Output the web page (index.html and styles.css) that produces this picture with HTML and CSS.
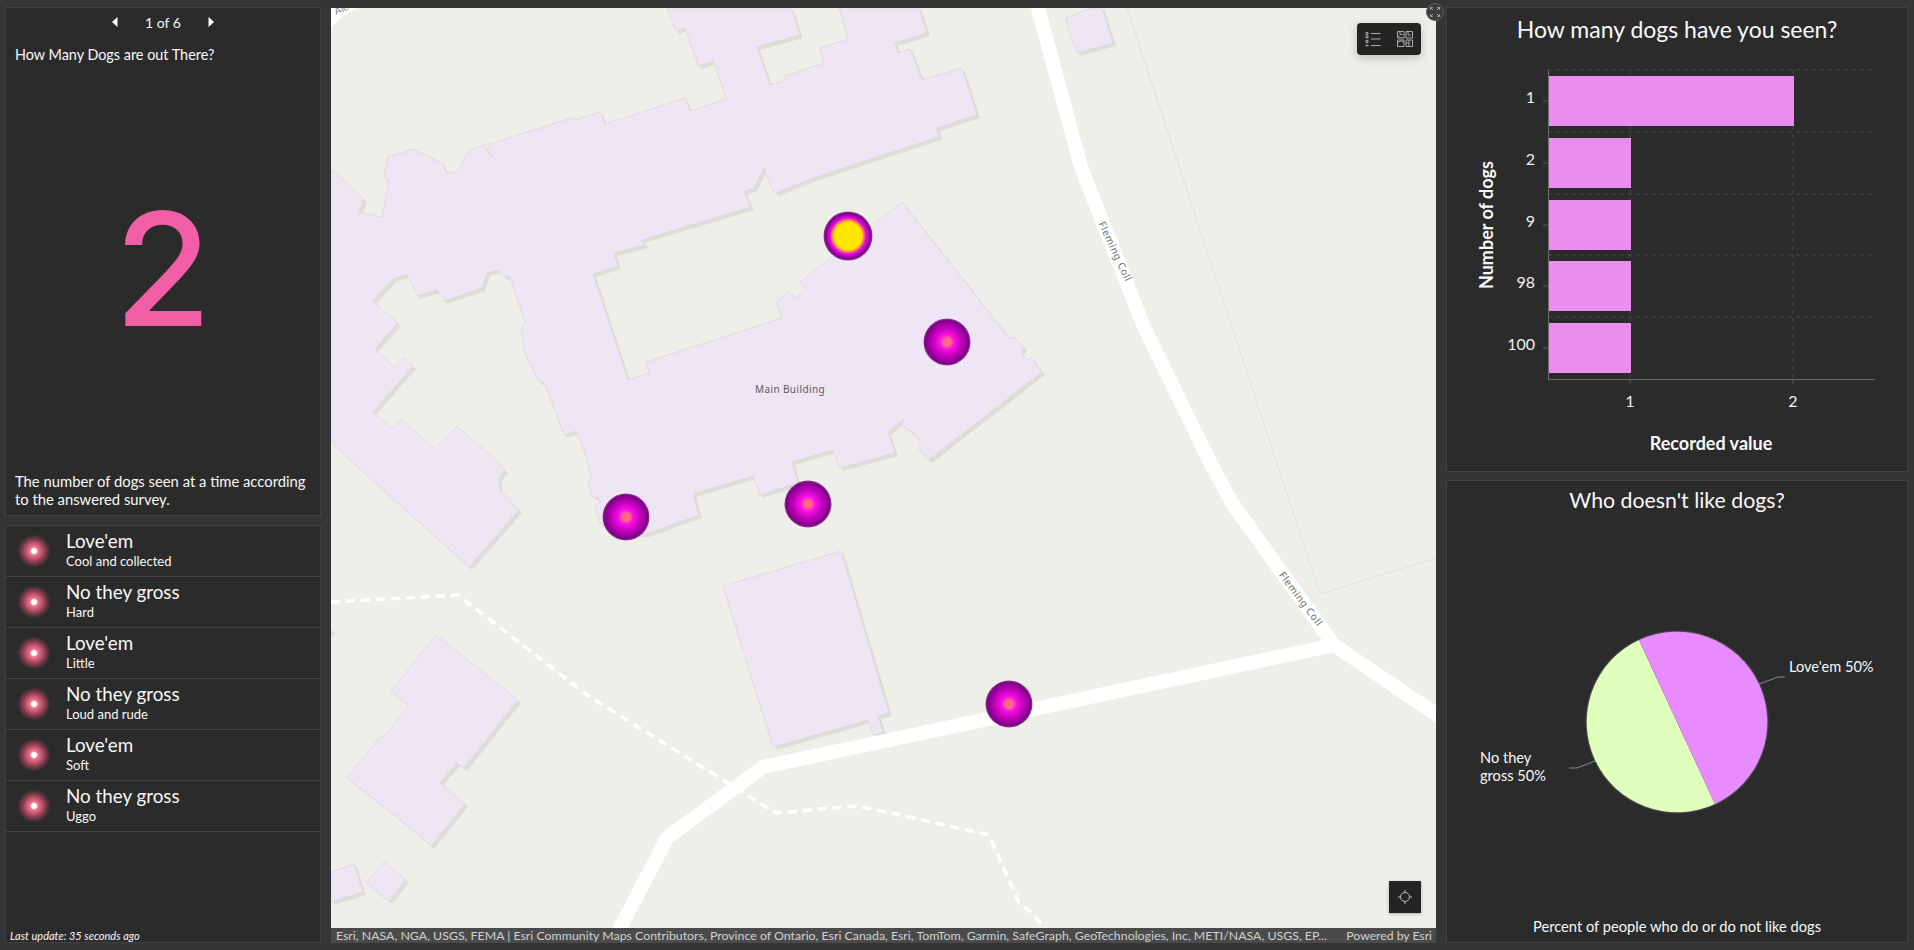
FILE: index.html
```html
<!DOCTYPE html>
<html lang="en">
<head>
  <meta charset="UTF-8">
  <meta name="viewport" content="width=device-width, initial-scale=1.0">
  <title>Dogs Dashboard</title>
  <link rel="stylesheet" href="styles.css">
</head>
<body>
  <div class="column left-column">
    <section class="panel indicator">
      <div class="pager">
        <svg class="pager-arrow" viewBox="0 0 6 10"><polygon points="5.5,0 5.5,10 0,5"/></svg>
        <span>1 of 6</span>
        <svg class="pager-arrow" viewBox="0 0 6 10"><polygon points="0.5,0 0.5,10 6,5"/></svg>
      </div>
      <p class="question">How Many Dogs are out There?</p>
      <div class="big-number">2</div>
      <p class="description">The number of dogs seen at a time according to the answered survey.</p>
    </section>

    <section class="panel list-panel">
      <div class="list-row"><span class="glow"></span><div><div class="row-title">Love'em</div><div class="row-sub">Cool and collected</div></div></div>
      <div class="list-row"><span class="glow"></span><div><div class="row-title">No they gross</div><div class="row-sub">Hard</div></div></div>
      <div class="list-row"><span class="glow"></span><div><div class="row-title">Love'em</div><div class="row-sub">Little</div></div></div>
      <div class="list-row"><span class="glow"></span><div><div class="row-title">No they gross</div><div class="row-sub">Loud and rude</div></div></div>
      <div class="list-row"><span class="glow"></span><div><div class="row-title">Love'em</div><div class="row-sub">Soft</div></div></div>
      <div class="list-row"><span class="glow"></span><div><div class="row-title">No they gross</div><div class="row-sub">Uggo</div></div></div>
      <div class="last-update">Last update: 35 seconds ago</div>
    </section>
  </div>

  <main class="map">
    <!-- viewBox uses page coordinates so the shapes are easy to check against the screenshot -->
    <svg class="map-canvas" viewBox="331 8 1105 935">
      <defs>
        <radialGradient id="dot">
          <stop offset="0" stop-color="#ff6a78"/>
          <stop offset="0.17" stop-color="#ff6a88"/>
          <stop offset="0.3" stop-color="#ff10e6"/>
          <stop offset="0.62" stop-color="#c000bc"/>
          <stop offset="0.92" stop-color="#7f0086"/>
          <stop offset="1" stop-color="#8e4a96"/>
        </radialGradient>
        <radialGradient id="dot-selected">
          <stop offset="0" stop-color="#ffe600"/>
          <stop offset="0.55" stop-color="#ffe600"/>
          <stop offset="0.63" stop-color="#ff9a3c"/>
          <stop offset="0.72" stop-color="#f010e0"/>
          <stop offset="0.92" stop-color="#80008a"/>
          <stop offset="1" stop-color="#8e4a96"/>
        </radialGradient>
        <polygon id="main-building" points="331,169 364,199 359,212 382,217 389,180 384,178 388,157 413,149 442,163 447,174 458,171 469,150 485,145 489,155 493,157 489,144 571,118 573,120 600,112 605,124 685,98 690,111 726,99 714,61 698,66 685,28 676,31 667,8 791,8 800,35 757,47 770,85 786,80 785,76 824,63 820,48 848,39 839,8 919,8 927,33 895,43 898,53 910,49 922,80 962,68 977,115 937,128 939,137 880,156 808,180 776,193 773,191 764,168 754,188 744,192 751,207 642,240 645,245 614,253 618,266 593,274 628,380 649,373 646,362 782,318 776,302 789,291 795,298 806,290 800,282 902,202 1010,339 1014,337 1024,347 1021,353 1028,360 1031,357 1042,372 929,460 917,447 921,443 916,435 901,425 904,419 888,432 895,453 840,468 833,450 792,462 798,483 760,495 753,476 693,494 699,515 646,534 616,535 600,523 595,506 600,503 598,497 592,497 588,482 592,480 587,460 577,431 564,435 544,382 539,382 525,353 521,328 525,323 510,276 504,277 498,270 487,273 482,288 444,301 437,290 417,296 407,275 394,278 373,301 398,323 375,349 394,367 403,357 413,366 373,412 392,429 401,419 435,449 457,426 496,460 505,470 499,478 500,490 519,510 469,567 350,460 331,442"/>
        <polygon id="hall" points="723,586 841,551 889,713 878,716 883,732 873,735 868,720 773,747"/>
        <polygon id="wing" points="436,635 518,700 464,768 457,763 440,783 465,804 431,846 407,825 347,778 380,737 383,738 409,706 391,691"/>
        <polygon id="shed-a" points="331,872 354,864 363,892 331,902"/>
        <polygon id="shed-b" points="384,862 406,880 389,901 366,883"/>
        <polygon id="shed-c" points="1065,18 1092,8 1102,8 1113,43 1077,53"/>
      </defs>

      <rect class="ground" x="331" y="8" width="1105" height="935"/>
      <path class="corner-road" d="M331 8 H358 Q342 15 331 28 Z"/>
      <text class="corner-label" x="336" y="15" transform="rotate(-24 336 15)">Ale</text>
      <polyline class="boundary" points="1127,8 1320,594 1436,558"/>
      <polygon class="shadow" points="331,630 335,633 331,638"/>

      <g class="shadow">
        <use href="#main-building" x="3" y="3"/>
        <use href="#hall" x="3" y="3"/>
        <use href="#wing" x="3" y="3"/>
        <use href="#shed-a" x="3" y="3"/>
        <use href="#shed-b" x="3" y="3"/>
        <use href="#shed-c" x="3" y="3"/>
      </g>
      <g class="building">
        <use href="#main-building"/>
        <use href="#hall"/>
        <use href="#wing"/>
        <use href="#shed-a"/>
        <use href="#shed-b"/>
        <use href="#shed-c"/>
      </g>

      <polyline class="path" points="331,602 458,595 587,695 776,813 855,806 887,812 989,835 1019,903 1028,910 1046,928"/>
      <polyline class="road" points="1037,4 1081,167 1144,327 1209,460 1232,503 1334,645 1440,717"/>
      <polyline class="road" points="1334,645 880,742 763,767 667,838 618,932"/>

      <text class="label-building" x="790" y="393" text-anchor="middle">Main Building</text>
      <text class="label-road" transform="translate(1112 253) rotate(65)" text-anchor="middle">Fleming Coll</text>
      <text class="label-road" transform="translate(1298 601) rotate(53)" text-anchor="middle">Fleming Coll</text>

      <circle cx="848" cy="236" r="24.5" fill="url(#dot-selected)"/>
      <circle cx="947" cy="342" r="23.5" fill="url(#dot)"/>
      <circle cx="626" cy="517" r="23.5" fill="url(#dot)"/>
      <circle cx="808" cy="504" r="23.5" fill="url(#dot)"/>
      <circle cx="1009" cy="704" r="23.5" fill="url(#dot)"/>
    </svg>

    <button class="fullscreen" type="button">
      <svg viewBox="0 0 16 16"><path d="M2 5V2h3M2 2l3.500 3.500M11 2h3v3M14 2l-3.500 3.500M2 11v3h3M2 14l3.500-3.500M11 14h3v-3M14 14l-3.500-3.500"/></svg>
    </button>

    <div class="toolbar">
      <svg class="tool-icon" viewBox="0 0 16 16">
        <path d="M1 1.500h2v2h-2zM1 5h2v2h-2zM1 9.500h2v2h-2z"/>
        <path d="M6 2.500h9.500M6 8h9.500M6 14.500h9.500M.5 14.500h3M2 13.500v2"/>
      </svg>
      <svg class="tool-icon" viewBox="0 0 16 16">
        <path d="M.5.500h6.500v6.500h-6.500zM9 .500h6.500v6.500h-6.500zM.5 9h6.500v6.500h-6.500zM9 9h6.500v6.500h-6.500z"/>
        <path d="M.5 4l3 3M3 1v2.500h2.500M11 .500v3.500h3M.5 12l2.500-2h2l2 2M12 9v6.500M9 12h3"/>
      </svg>
    </div>

    <button class="locate" type="button">
      <svg viewBox="0 0 16 16"><circle cx="8" cy="8" r="4.500"/><path d="M8 1v2.500M8 12.500v2.500M1 8h2.500M12.500 8h2.500"/></svg>
    </button>

    <div class="attribution">
      <span>Esri, NASA, NGA, USGS, FEMA | Esri Community Maps Contributors, Province of Ontario, Esri Canada, Esri, TomTom, Garmin, SafeGraph, GeoTechnologies, Inc, METI/NASA, USGS, EP...</span>
      <span class="powered">Powered by Esri</span>
    </div>
  </main>

  <div class="column right-column">
    <section class="panel chart-panel bar-panel">
      <h2 class="chart-title">How many dogs have you seen?</h2>
      <svg class="chart" viewBox="1447 44 460 427">
        <g class="grid-line">
          <path d="M1548 70H1875M1548 132H1875M1548 194H1875M1548 255H1875M1548 317H1875"/>
          <path d="M1630 70V379M1793 70V379"/>
        </g>
        <g class="bar">
          <rect x="1548" y="76" width="246" height="50"/>
          <rect x="1548" y="138" width="83" height="50"/>
          <rect x="1548" y="200" width="83" height="50"/>
          <rect x="1548" y="261" width="83" height="50"/>
          <rect x="1548" y="323" width="83" height="50"/>
        </g>
        <path class="tick" d="M1543 101H1548M1543 163H1548M1543 225H1548M1543 286H1548M1543 348H1548M1630 379V384M1793 379V384"/>
        <path class="axis" d="M1548.500 70V379.500H1875"/>
        <g class="axis-label" text-anchor="end">
          <text x="1535" y="103">1</text>
          <text x="1535" y="165">2</text>
          <text x="1535" y="227">9</text>
          <text x="1535" y="288">98</text>
          <text x="1535" y="350">100</text>
        </g>
        <g class="axis-label" text-anchor="middle">
          <text x="1630" y="407">1</text>
          <text x="1793" y="407">2</text>
        </g>
        <text class="axis-title" x="1711" y="450" text-anchor="middle">Recorded value</text>
        <text class="axis-title" transform="translate(1493 225) rotate(-90)" text-anchor="middle">Number of dogs</text>
      </svg>
    </section>

    <section class="panel chart-panel pie-panel">
      <h2 class="chart-title">Who doesn't like dogs?</h2>
      <svg class="chart" viewBox="1447 515 460 402">
        <circle class="pie-edge" cx="1677" cy="722" r="90"/>
        <path class="slice-green" d="M1677 722L1715 804A90 90 0 0 1 1639 640Z"/>
        <path class="slice-purple" d="M1677 722L1639 640A90 90 0 0 1 1715 804Z"/>
        <polyline class="leader" points="1759,684 1778,677 1785,677"/>
        <polyline class="leader" points="1595,761 1577,768 1569,768"/>
        <text class="pie-label" x="1789" y="672">Love'em 50%</text>
        <text class="pie-label" x="1480" y="763">No they</text>
        <text class="pie-label" x="1480" y="781">gross 50%</text>
      </svg>
      <p class="chart-caption">Percent of people who do or do not like dogs</p>
    </section>
  </div>
</body>
</html>
```

FILE: styles.css
```css
/* General Styles */
body {
  font-family: 'Lato', 'Open Sans', sans-serif;
  background-color: #353535;
  color: #f8f8f8;
  margin: 0;
  padding: 7px 6px 7px 5px;
  box-sizing: border-box;
  width: 1914px;
  height: 950px;
  overflow: hidden;
  display: grid;
  grid-template-columns: 316px 1105px 462px;
  column-gap: 10px;
}

.column {
  display: flex;
  flex-direction: column;
  min-height: 0;
}

.left-column {
  gap: 9px;
}

.right-column {
  gap: 8px;
}

.panel {
  background-color: #2b2b2b;
  border: 1px solid #414141;
  box-sizing: border-box;
  display: flex;
  flex-direction: column;
}

/* Indicator */
.indicator {
  height: 509px;
  padding: 0 9px 7px;
}

.pager {
  height: 28px;
  display: flex;
  align-items: center;
  justify-content: center;
  gap: 27px;
  font-size: 14px;
}

.pager-arrow {
  width: 6px;
  height: 10px;
  fill: #fff;
}

.question {
  margin: 10px 0 0;
  font-size: 14.400px;
  line-height: 18px;
}

.big-number {
  flex: 1;
  display: flex;
  align-items: center;
  justify-content: center;
  font-family: 'Inter', sans-serif;
  font-size: 158px;
  font-weight: 500;
  color: #f25ea5;
}

.description {
  margin: 0;
  font-size: 14.800px;
  line-height: 18px;
}

/* List */
.list-panel {
  flex: 1;
}

.list-row {
  height: 51px;
  box-sizing: border-box;
  border-bottom: 1px solid #414141;
  display: flex;
  align-items: center;
  gap: 14px;
  padding: 0 0 4px 10px;
}

.glow {
  width: 36px;
  height: 36px;
  margin-top: 4px;
  flex: none;
  border-radius: 50%;
  background: radial-gradient(circle closest-side, #fff 0, #fff 13%, #ea7a94 22%, #cc5a74 40%, #7c3a4a 66%, #2b2b2b 92%);
}

.row-title {
  font-size: 18.800px;
  line-height: 24px;
}

.row-sub {
  font-size: 13px;
  line-height: 16px;
}

.last-update {
  margin-top: auto;
  padding-left: 4px;
  font-size: 11px;
  font-style: italic;
  line-height: 13px;
}

/* Map */
.map {
  position: relative;
  margin-top: 1px;
}

.map-canvas {
  display: block;
  width: 1105px;
  height: 935px;
}

.ground { fill: #eeefe9; }
.corner-road { fill: #fff; }
.corner-label { font-size: 10px; fill: #8a8a8a; }
.boundary { fill: none; stroke: #e0e1dd; stroke-width: 1; }
.shadow { fill: #deded7; }
.building { fill: #eee6f4; stroke: #d9d6d9; stroke-width: 0.7; }
.road { fill: none; stroke: #fff; stroke-width: 14; stroke-linejoin: bevel; }
.path { fill: none; stroke: #fff; stroke-width: 3.500; stroke-dasharray: 9 6; }

.label-building {
  font-family: 'Noto Sans', sans-serif;
  font-size: 10px;
  letter-spacing: 0.4px;
  fill: #5e5854;
}

.label-road {
  font-family: 'Noto Sans', sans-serif;
  font-size: 10px;
  letter-spacing: 0.6px;
  fill: #6f6f6f;
}

.fullscreen {
  position: absolute;
  top: -5px;
  right: -8px;
  width: 18px;
  height: 18px;
  padding: 2px;
  border: 1px solid #5e5e5e;
  border-radius: 50%;
  background-color: #3c3c3c;
  box-sizing: border-box;
}

.fullscreen svg {
  display: block;
  fill: none;
  stroke: #a5a5a5;
  stroke-width: 1.300;
}

.toolbar {
  position: absolute;
  top: 15px;
  right: 15px;
  display: flex;
  gap: 16px;
  padding: 8px;
  background-color: #242424;
  border-radius: 4px;
  box-shadow: 0 3px 10px rgba(0, 0, 0, 0.2);
}

.tool-icon {
  width: 16px;
  height: 16px;
  fill: none;
  stroke: #a8a8a8;
  stroke-width: 1;
}

.locate {
  position: absolute;
  right: 15px;
  bottom: 30px;
  width: 32px;
  height: 32px;
  padding: 8px;
  border: none;
  background-color: #242424;
  box-shadow: 0 1px 3px rgba(0, 0, 0, 0.25);
}

.locate svg {
  display: block;
  fill: none;
  stroke: #bdbdbd;
  stroke-width: 1;
}

.attribution {
  position: absolute;
  left: 0;
  right: 0;
  bottom: 0;
  height: 15px;
  padding: 0 4px 0 5px;
  display: flex;
  justify-content: space-between;
  white-space: nowrap;
  background-color: #4a4a4a;
  color: #d2d2d2;
  font-size: 12.350px;
  line-height: 15px;
}

.powered {
  font-size: 12.200px;
}

/* Charts */
.bar-panel {
  height: 465px;
}

.pie-panel {
  height: 463px;
}

.chart-title {
  margin: 0;
  padding-top: 6px;
  font-size: 23px;
  font-weight: 400;
  line-height: 30px;
  text-align: center;
}

.pie-panel .chart-title {
  padding-top: 4px;
  font-size: 21.300px;
}

.chart {
  display: block;
  flex: 1;
  min-height: 0;
  width: 460px;
}

.grid-line path {
  fill: none;
  stroke: #484848;
  stroke-dasharray: 4 4;
}

.bar { fill: #e98eee; }
.tick { stroke: #5a5a5a; }
.axis { fill: none; stroke: #6e6e6e; }
.axis-label { font-size: 16px; fill: #f0f0f0; }
.axis-title { font-size: 18px; font-weight: 700; fill: #f8f8f8; }

.pie-edge { fill: none; stroke: #4a4a4a; stroke-width: 3; }
.slice-green { fill: #e1ffbc; }
.slice-purple { fill: #e88bff; }
.leader { fill: none; stroke: #8a8a8a; }
.pie-label { font-size: 14.600px; fill: #f8f8f8; }

.chart-caption {
  margin: 0;
  padding-bottom: 7px;
  font-size: 14.700px;
  line-height: 18px;
  text-align: center;
}
```
